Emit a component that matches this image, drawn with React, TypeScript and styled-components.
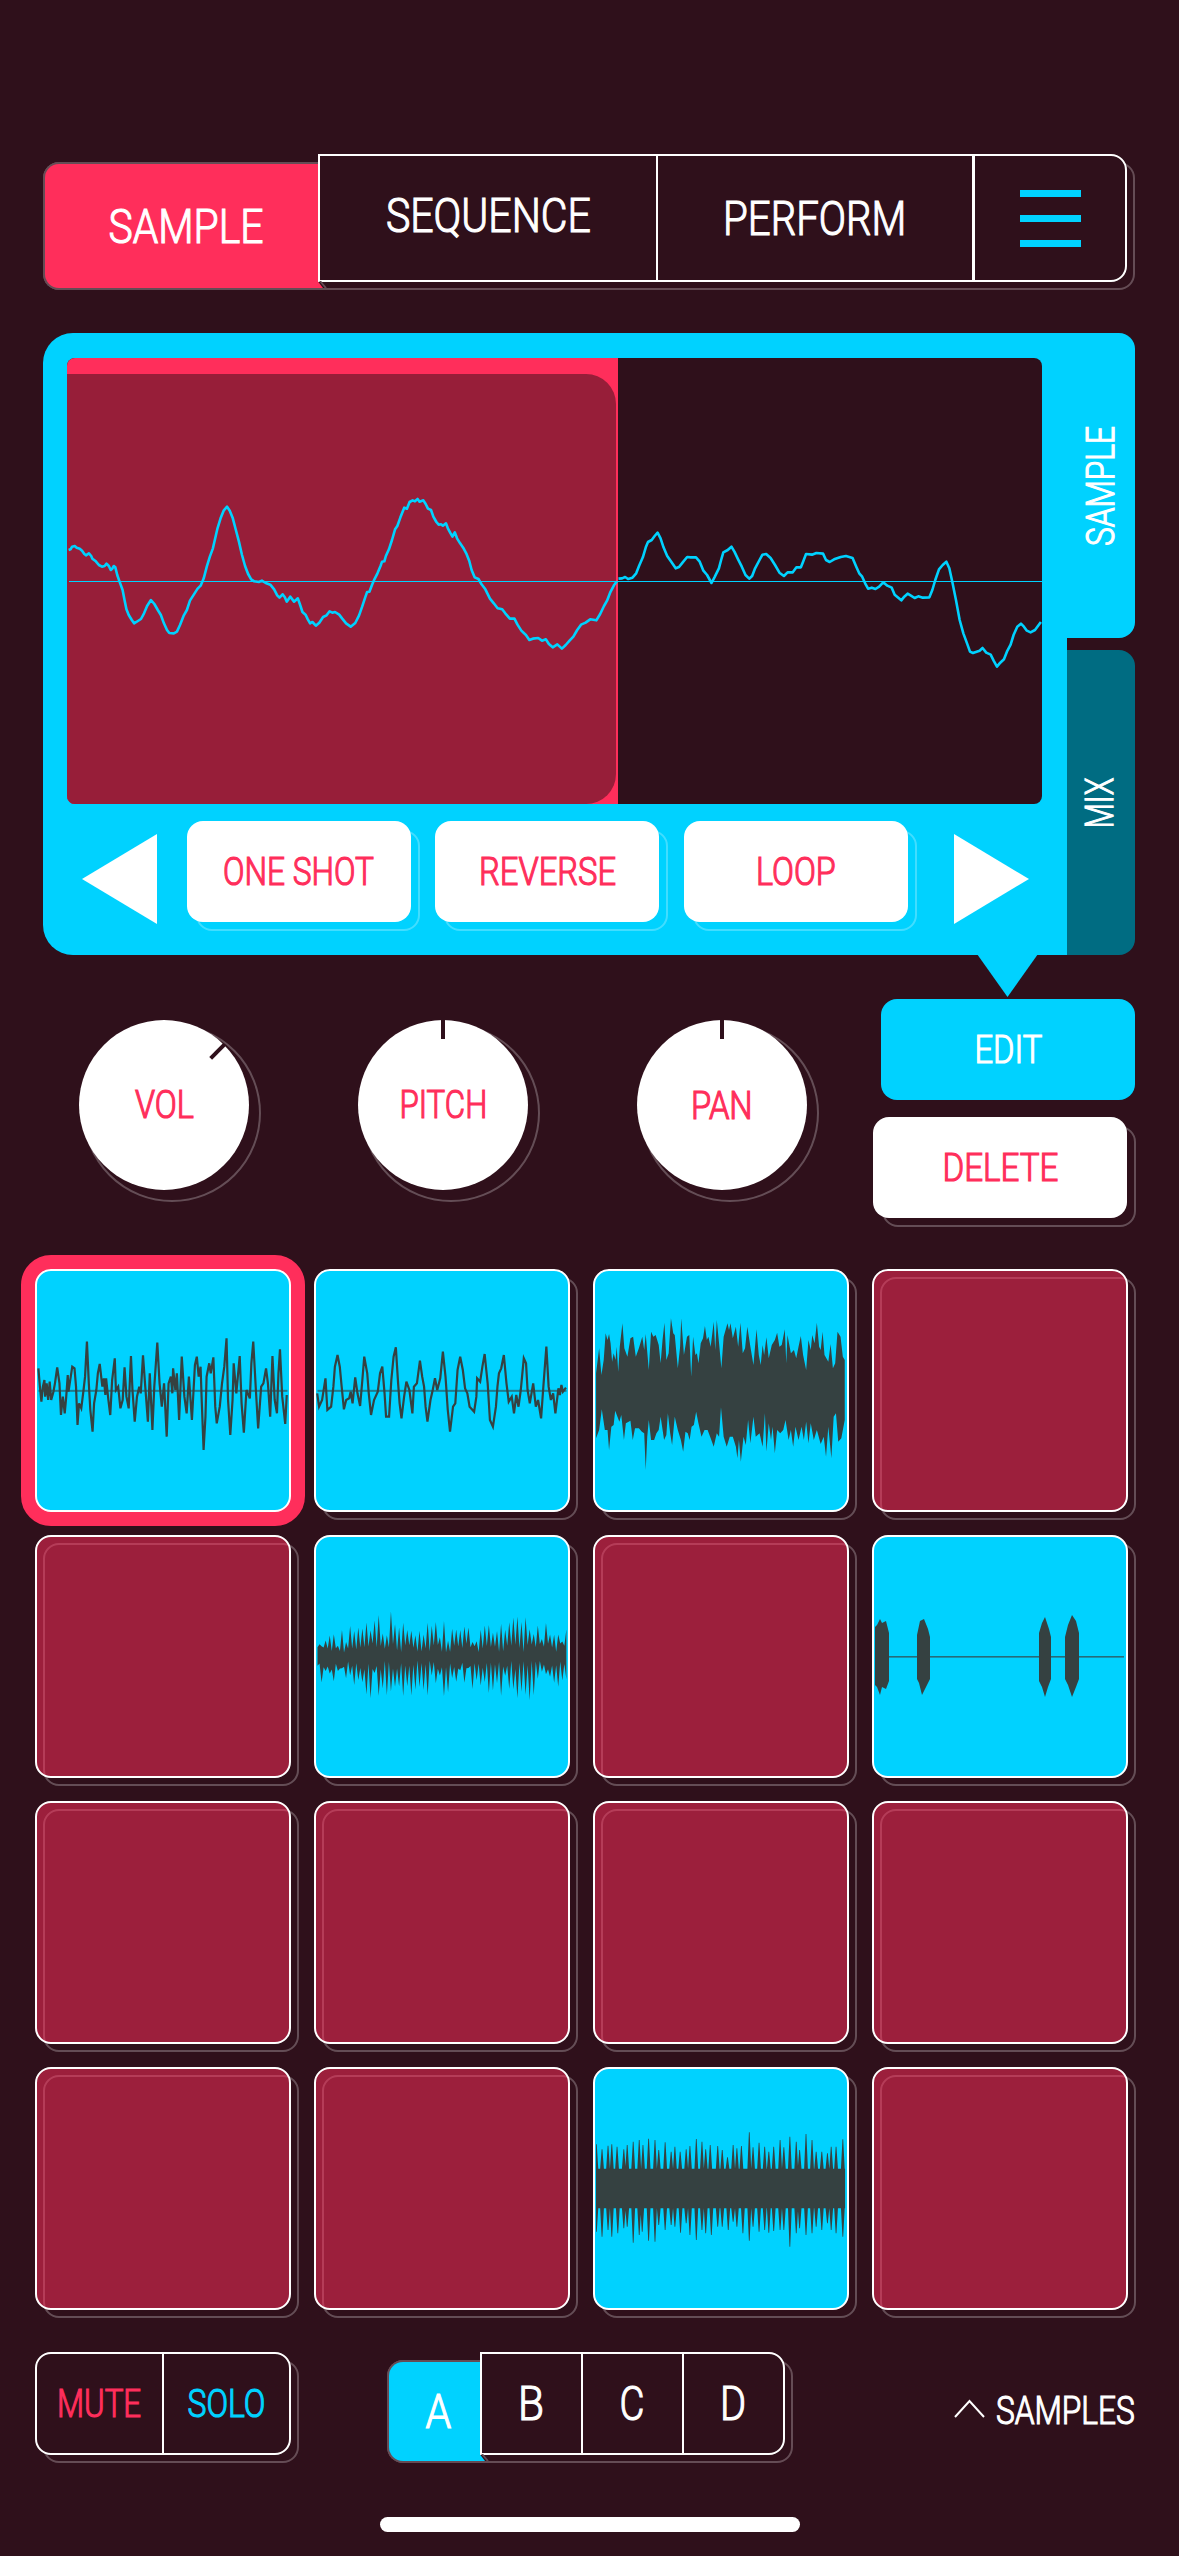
import React, { useLayoutEffect, useRef, useState } from "react";
import styled, { createGlobalStyle } from "styled-components";

const C = {
  bg: "#2f101b",
  pink: "#ff2e5b",
  cyan: "#00d2ff",
  teal: "#006c82",
  ghost: "rgba(255,255,255,0.26)",
  ghostSolid: "#654c55",
  wave: "#354141",
};

const Global = createGlobalStyle`
  html, body { margin: 0; background: ${C.bg}; }
  *, *::before, *::after { box-sizing: border-box; }
`;

const Screen = styled.main`
  width: 1179px;
  height: 2556px;
  padding: 154px 35px 0;
  overflow: hidden;
  display: flex;
  flex-direction: column;
  background: ${C.bg};
  color: #fff;
  font-family: Roboto, "Liberation Sans", sans-serif;
`;

/* ---------- text ---------- */

const Text = styled.span<{ $size: number; $color: string }>`
  display: inline-block;
  flex: none;
  white-space: nowrap;
  font-size: ${(p) => p.$size}px;
  font-weight: 300;
  line-height: 1;
  color: ${(p) => p.$color};
  -webkit-text-stroke: 1.2px ${(p) => p.$color};
  stroke-linejoin: round;
`;

type LabelProps = {
  children: string;
  width: number;
  size?: number;
  color?: string;
  turned?: boolean;
  lift?: number;
};

/** Condenses a caption horizontally until it takes up the given width. */
function Label({ children, width, size = 38, color = "#fff", turned, lift = 0 }: LabelProps) {
  const ref = useRef<HTMLSpanElement>(null);
  const [scale, setScale] = useState(1);
  useLayoutEffect(() => {
    if (ref.current) setScale(width / ref.current.offsetWidth);
  }, [width, size, children]);
  return (
    <Text
      ref={ref}
      $size={size}
      $color={color}
      style={{ transform: `translateY(${-lift}px) ${turned ? "rotate(-90deg)" : ""} scaleX(${scale})` }}
    >
      {children}
    </Text>
  );
}

/* ---------- segmented bars ---------- */

const Segmented = styled.nav<{ $width: number; $height: number }>`
  position: relative;
  isolation: isolate;
  display: flex;
  width: ${(p) => p.$width}px;
  height: ${(p) => p.$height}px;
  &::before {
    content: "";
    position: absolute;
    z-index: -1;
    inset: 8px -8px -8px 8px;
    border: 2px solid ${C.ghostSolid};
    border-radius: 16px;
  }
`;

const Pressed = styled.button<{ $width: number; $fill: string }>`
  flex: none;
  width: ${(p) => p.$width}px;
  margin: 8px 0 -8px 8px;
  padding: 0 0 0 8px;
  display: flex;
  align-items: center;
  justify-content: center;
  font: inherit;
  background: ${(p) => p.$fill};
  border: 2px solid ${C.ghostSolid};
  border-right: 0;
  border-radius: 16px 0 0 16px;
`;

const Wedge = styled.svg<{ $left: number }>`
  position: absolute;
  left: ${(p) => p.$left}px;
  bottom: -7px;
  width: 10px;
  height: 8px;
`;

const Raisedbar = styled.div<{ $round?: boolean }>`
  flex: 1;
  display: flex;
  background: ${C.bg};
  border: 2px solid #fff;
  border-radius: ${(p) => (p.$round ? "16px" : "0 16px 16px 0")};
  position: relative;
`;

const Segment = styled.button<{ $width?: number; $rule?: number }>`
  flex: ${(p) => (p.$width ? `0 0 ${p.$width}px` : "1")};
  display: flex;
  align-items: center;
  justify-content: center;
  padding: 0;
  background: none;
  border: 0 solid #fff;
  border-right-width: ${(p) => p.$rule ?? 0}px;
  font: inherit;
`;

const Burger = styled.span`
  width: 61px;
  height: 57px;
  display: flex;
  flex-direction: column;
  justify-content: space-between;
  span {
    height: 7px;
    background: ${C.cyan};
  }
`;

function PressedWedge({ left, fill }: { left: number; fill: string }) {
  return (
    <Wedge $left={left} viewBox="0 0 10 8">
      <path d="M0 0V7H5L0 0.5Z" fill={fill} />
      <path d="M2 0L8 7.2" stroke={C.ghostSolid} strokeWidth="1.8" />
    </Wedge>
  );
}

/* ---------- sample editor ---------- */

const Editor = styled.section`
  position: relative;
  display: flex;
  width: 1092px;
  height: 622px;
  margin: 51px 0 0 8px;
`;

const EditorBody = styled.div`
  flex: none;
  width: 1023.5px;
  padding: 25px 0 0 24px;
  background: ${C.cyan};
  border-radius: 30px 0 0 30px;
`;

const Pointer = styled.svg`
  position: absolute;
  left: 934px;
  top: 621px;
  width: 61px;
  height: 43px;
`;

const View = styled.div`
  position: relative;
  width: 975px;
  height: 446px;
  border-radius: 8px;
  overflow: hidden;
  background: ${C.bg};
`;

const Selection = styled.div`
  width: 551px;
  height: 446px;
  padding: 16px 2px 0 0;
  background: ${C.pink};
  &::before {
    content: "";
    display: block;
    height: 430px;
    background: #971e39;
    border-radius: 0 30px 30px 0;
  }
`;

const Trace = styled.svg`
  position: absolute;
  inset: 0;
  width: 975px;
  height: 446px;
`;

const Controls = styled.div`
  display: flex;
  align-items: flex-start;
  padding: 17px 0 0 15px;
`;

const Arrow = styled.svg<{ $gap?: number }>`
  flex: none;
  width: 75px;
  height: 90px;
  margin: 13px 0 0 ${(p) => p.$gap ?? 0}px;
  fill: #fff;
`;

const ButtonSet = styled.div`
  display: flex;
  gap: 24.6px;
  margin-left: 29.5px;
`;

const Key = styled.button<{ $width: number; $left?: number; $flat?: boolean }>`
  position: relative;
  width: ${(p) => p.$width}px;
  height: 101px;
  margin: 0 0 0 ${(p) => p.$left ?? 0}px;
  padding: 0;
  border: 0;
  background: none;
  isolation: isolate;
  font: inherit;
  &::before {
    content: "";
    display: ${(p) => (p.$flat ? "none" : "block")};
    position: absolute;
    z-index: -1;
    inset: 9px -9px -9px 9px;
    border: 2px solid ${C.ghost};
    border-radius: 16px;
  }
`;

const KeyFace = styled.span<{ $fill?: string }>`
  display: flex;
  align-items: center;
  justify-content: center;
  width: 100%;
  height: 100%;
  background: ${(p) => p.$fill ?? "#fff"};
  border-radius: 16px;
`;

const Tabs = styled.div`
  flex: none;
  width: 68.5px;
  display: flex;
  flex-direction: column;
  gap: 12px;
`;

const Tab = styled.button<{ $fill: string }>`
  flex: 1;
  min-width: 0;
  display: flex;
  align-items: center;
  justify-content: center;
  padding: 0;
  border: 0;
  background: ${(p) => p.$fill};
  border-radius: 0 16px 16px 0;
  font: inherit;
`;

/* ---------- grids ---------- */

const Columns = styled.section<{ $top: number }>`
  display: grid;
  grid-template-columns: repeat(4, 256px);
  gap: 23px;
  margin-top: ${(p) => p.$top}px;
`;

const Knob = styled.div`
  position: relative;
  isolation: isolate;
  width: 170px;
  height: 170px;
  margin: 21px 0 0 44px;
  &::before {
    content: "";
    position: absolute;
    z-index: -1;
    left: 4px;
    top: 4px;
    width: 178px;
    height: 178px;
    border: 2px solid ${C.ghost};
    border-radius: 50%;
  }
`;

const Dial = styled.div`
  display: flex;
  align-items: center;
  justify-content: center;
  width: 170px;
  height: 170px;
  border-radius: 50%;
  background: #fff;
`;

const Tick = styled.i<{ $angle: number }>`
  position: absolute;
  left: 83px;
  top: -1px;
  width: 4px;
  height: 20px;
  background: ${C.bg};
  transform-origin: 2px 86px;
  transform: rotate(${(p) => p.$angle}deg);
`;

const Stack = styled.div`
  display: flex;
  flex-direction: column;
  gap: 17px;
  padding-left: 1px;
`;

const PadCell = styled.div<{ $selected?: boolean }>`
  position: relative;
  isolation: isolate;
  height: 243px;
  &::before {
    content: "";
    position: absolute;
    z-index: -1;
    inset: ${(p) => (p.$selected ? "-14px" : "8px -8px -8px 8px")};
    border: 2px solid ${(p) => (p.$selected ? C.pink : C.ghost)};
    background: ${(p) => (p.$selected ? C.pink : "none")};
    border-radius: ${(p) => (p.$selected ? 30 : 16)}px;
  }
`;

const PadFace = styled.button<{ $loaded: boolean }>`
  display: block;
  width: 256px;
  height: 243px;
  padding: 0;
  overflow: hidden;
  border: 2px solid #fff;
  border-radius: 16px;
  background: ${(p) => (p.$loaded ? C.cyan : "rgba(255,46,91,0.525)")};
  background-clip: border-box;
`;

const PadWave = styled.svg`
  display: block;
  width: 252px;
  height: 239px;
`;

/* ---------- footer ---------- */

const Footer = styled.footer`
  display: flex;
  margin-top: 42px;
  height: 103px;
`;

const Bank = styled.div`
  margin-left: 88px;
`;

const Samples = styled.button`
  display: flex;
  align-items: center;
  justify-content: center;
  width: 139px;
  height: 40px;
  margin: 39px 0 0 11px;
  padding: 0;
  border: 0;
  background: none;
  font: inherit;
`;

const Chevron = styled.svg`
  width: 31px;
  height: 19px;
  margin: 47px 0 0 169px;
  fill: none;
  stroke: #fff;
  stroke-width: 2;
`;

const HomeBar = styled.div`
  width: 420px;
  height: 15px;
  margin: 62px 0 0 345px;
  border-radius: 8px;
  background: #fff;
`;

/* ---------- wave data ---------- */

const MAIN_A =
  "101,690 106,688 110,680 117,678 122,683 130,686 136,692 142,702 147,706 154,700 160,708 163,716 172,724 180,735 188,740 195,738 200,731 206,738 211,750 215,746 219,738 223,742 228,765 234,785 242,810 247,840 252,868 258,885 266,900 272,910 278,906 290,897 298,880 306,858 316,840 325,852 334,870 342,885 350,910 358,930 364,939 376,940 384,935 392,915 402,886 410,870 418,842 428,824 438,806 446,797 454,775 462,740 470,710 478,685 484,655 490,625 498,595 506,572 515,560 522,572 530,595 538,630 546,665 554,705 562,738 570,762 578,778 586,784 598,786 606,782 616,789 628,794 638,808 646,826 652,833 660,823 666,832 671,845 680,830 690,845 700,835 706,855 712,876 720,884 726,898 732,910 738,906 747,917 756,908 766,891 775,886 783,874 790,878 797,876 808,884 816,896 826,910 838,920 850,909 860,886 868,860 876,832 881,816 887,815 894,794 900,778 908,760 916,738 920,725 926,724 930,708 938,688 946,660 954,628 960,618 968,592 978,563 985,566 992,546 1000,541 1006,544 1013,537 1018,545 1028,541 1034,552 1040,566 1048,570 1054,590 1062,606 1068,614 1074,613 1079,617 1087,610 1092,625 1098,638 1104,650 1110,637 1116,655 1124,670 1132,683 1140,700 1148,723 1154,750 1162,772 1172,777 1180,793 1190,808 1202,836 1212,850 1222,865 1234,868 1242,880 1254,896 1266,896 1274,914 1284,932 1296,945 1305,960 1314,956 1328,954 1338,962 1348,958 1356,972 1366,982 1378,973 1390,986 1400,975 1410,962 1420,950 1430,930 1440,914 1452,908 1464,898 1480,901 1490,882 1500,858 1508,842 1516,818 1526,796 1534,784";
const MAIN_B =
  "50,776 60,775 68,771 76,777 88,773 98,760 106,737 116,712 124,682 130,666 140,660 148,648 156,638 164,655 172,682 182,708 192,724 205,745 214,741 224,727 236,711 246,712 260,712 270,725 280,752 290,765 302,789 310,772 322,745 328,720 334,697 346,690 356,680 364,695 374,718 384,740 394,765 404,776 412,768 420,745 432,720 440,704 450,702 462,714 474,735 486,758 498,768 508,757 522,757 532,742 544,742 550,725 558,702 574,704 586,699 604,701 612,720 622,726 634,718 652,711 666,708 684,714 694,740 702,760 710,770 718,790 726,806 736,803 746,807 756,800 767,787 778,797 790,803 798,824 816,841 824,830 833,821 842,827 852,834 862,829 874,833 892,832 900,810 908,780 918,748 928,735 938,725 946,745 954,785 964,840 974,900 984,940 994,970 1002,995 1010,999 1028,992 1036,984 1046,998 1058,1004 1066,1022 1075,1040 1084,1028 1094,1018 1102,995 1112,974 1120,945 1130,920 1140,911 1148,920 1156,932 1166,937 1178,930 1186,918 1194,906";
const PAD_1 =
  "102,385 106,440 110,485 114,440 118,420 120,470 124,430 128,480 132,425 136,480 142,455 146,430 152,382 158,430 162,525 167,470 172,520 176,470 180,405 182,455 188,410 192,380 198,385 202,440 206,555 210,490 216,505 222,450 226,410 231,305 236,430 240,510 246,575 250,490 256,450 260,400 265,372 272,440 276,415 280,465 282,415 288,480 293,525 298,420 305,355 308,450 314,440 320,505 326,480 331,382 336,470 342,505 348,348 352,450 358,545 364,470 370,440 374,460 380,346 386,440 393,545 398,400 405,570 410,440 418,308 424,430 430,500 436,430 443,590 448,430 454,410 458,460 460,385 466,450 470,400 476,540 483,350 490,470 496,520 502,410 510,540 518,375 523,350 528,410 533,380 536,480 541,630 546,530 549,410 556,370 560,400 567,352 572,500 576,550 584,500 590,430 596,380 602,295 606,480 612,585 618,480 621,370 628,460 637,348 642,490 648,578 655,450 664,475 668,370 673,305 680,450 686,565 694,440 700,430 707,385 712,430 718,530 724,348 730,480 736,520 740,400 744,328 750,470 758,552 762,465";
const PAD_2 =
  "843,460 848,500 856,480 865,415 870,510 880,500 886,440 890,380 897,345 903,380 908,440 914,508 920,480 928,475 932,455 937,490 944,412 950,460 957,498 963,420 968,350 976,400 980,460 986,525 994,480 1004,455 1010,400 1016,380 1022,460 1026,530 1034,530 1040,420 1046,350 1052,322 1058,430 1062,490 1067,535 1074,470 1080,425 1088,450 1096,520 1100,440 1108,430 1116,362 1122,410 1127,440 1131,500 1136,545 1144,480 1150,450 1156,415 1162,450 1170,415 1177,335 1184,410 1190,510 1196,575 1204,500 1210,490 1216,390 1223,350 1230,390 1236,445 1242,460 1248,500 1260,515 1266,470 1268,415 1276,425 1282,380 1288,342 1296,430 1302,540 1310,560 1318,500 1322,440 1326,400 1332,385 1339,345 1346,430 1352,485 1360,470 1366,520 1372,465 1378,500 1384,450 1392,355 1398,370 1402,450 1408,490 1417,430 1424,500 1430,480 1438,535 1444,440 1452,320 1458,440 1464,480 1470,460 1476,520 1484,445 1488,465 1492,435 1496,455 1504,443";
const PAD_3_TOP =
  "42,400 50,325 56,405 62,360 67,280 72,300 76,282 80,310 84,365 88,340 93,360 96,320 100,395 104,320 111,250 116,325 124,350 132,295 139,290 146,350 154,325 163,290 168,330 172,282 180,390 186,275 192,290 198,285 206,315 211,370 216,300 221,248 226,360 232,340 238,235 244,280 248,285 256,385 262,320 265,235 272,345 280,290 286,285 291,410 296,290 302,345 306,340 310,370 316,310 322,295 327,258 332,300 336,290 342,320 350,245 354,330 358,240 364,310 370,385 376,290 386,250 390,270 394,250 400,295 408,260 414,320 420,248 426,340 432,325 438,260 446,320 454,375 462,268 468,345 473,375 478,315 482,345 488,292 494,355 502,315 510,300 516,278 522,320 528,315 536,268 540,370 543,285 552,340 560,330 566,355 572,320 578,288 584,345 592,390 598,300 604,330 608,285 614,310 620,248 626,320 630,330 635,275 640,345 650,365 656,312 662,385 668,370 674,275 682,290 688,350 693,360";
const PAD_3_BOTTOM =
  "42,595 50,570 57,508 65,570 72,570 76,630 82,560 88,555 92,512 98,530 103,545 108,525 115,600 120,550 132,542 138,600 144,565 154,565 162,575 168,580 172,690 176,590 180,540 186,600 194,600 200,580 206,570 211,530 220,600 226,585 230,520 236,580 241,615 248,530 256,570 264,600 270,635 276,575 282,580 287,600 292,560 298,555 304,515 310,550 318,590 326,570 334,570 342,595 350,620 358,580 364,590 369,502 376,590 384,620 392,590 400,590 408,620 412,655 416,600 421,665 428,590 434,615 440,540 446,610 454,530 460,590 470,580 478,620 484,520 488,635 494,550 500,600 504,560 510,640 516,570 524,580 532,570 538,540 546,600 552,570 558,620 564,560 572,600 580,560 586,600 592,545 598,610 604,550 612,600 620,570 630,612 638,590 644,650 650,560 658,655 664,530 670,520 676,605 684,595 693,540";
const PAD_15_UP =
  "17,283 32,298 48,287 58,283 72,290 90,298 99,285 115,275 131,270 141,285 156,266 173,270 183,300 200,277 216,305 226,290 240,305 256,298 266,288 283,267 298,275 308,298 320,285 340,288 352,300 366,322 381,285 391,295 403,288 424,247 434,292 450,278 465,290 476,305 489,290 506,270 516,292 532,260 549,275 558,300 575,252 591,270 602,305 617,305 632,310 642,290 655,290 673,268";
const PAD_15_DOWN =
  "17,545 32,560 48,540 58,560 74,550 90,535 99,530 115,578 131,555 139,545 156,572 173,575 183,525 200,540 216,525 226,530 241,548 256,520 266,555 283,570 298,540 308,550 323,555 340,530 352,530 368,540 381,515 391,530 407,550 424,572 434,530 450,545 465,540 476,548 489,543 506,540 516,540 532,590 549,550 558,535 575,555 591,550 602,530 617,540 632,520 642,540 655,550 673,560";

type Pt = [number, number];
const parse = (s: string): Pt[] => s.split(" ").map((p) => p.split(",").map(Number) as Pt);
const area = (top: Pt[], bottom: Pt[]) =>
  [...top, ...[...bottom].reverse()].map((p) => p.join(",")).join(" ");

/** Puts a narrow spike on a flat body edge at every given peak. */
const spikes = (s: string, edge: number, half: number, from: number, to: number): Pt[] => [
  [from, edge],
  ...parse(s).flatMap(([x, y]): Pt[] => [
    [Math.max(from, x - half), edge],
    [x - 1, y],
    [x + 1, y],
    [Math.min(to, x + half), edge],
  ]),
  [to, edge],
];

const Line = ({ box, points }: { box: string; points: string }) => {
  const [x, y, w, h] = box.split(" ").map(Number);
  const mid = y + h / 2 + 1;
  return (
    <PadWave viewBox={box} preserveAspectRatio="none">
      <rect x={x + 4} y={mid - 3} width={w - 8} height="6" fill={C.wave} opacity="0.6" />
      <polyline
        points={points}
        fill="none"
        stroke={C.wave}
        strokeWidth="2.2"
        vectorEffect="non-scaling-stroke"
      />
    </PadWave>
  );
};

const Solid = ({ box, points }: { box: string; points: string }) => (
  <PadWave viewBox={box} preserveAspectRatio="none">
    <polygon points={points} fill={C.wave} />
  </PadWave>
);

const pad6 = (() => {
  const top: Pt[] = [];
  const bottom: Pt[] = [];
  for (let i = 0; i <= 122; i++) {
    const x = 1.5 + i * 2.04;
    const swell = 22 + 20 * Math.exp(-(((i - 45) / 26) ** 2)) + 14 * Math.exp(-(((i - 100) / 16) ** 2));
    const a = Math.abs(Math.sin(i * 12.9898) * 43758.5453) % 1;
    const b = Math.abs(Math.sin(i * 78.233) * 12543.123) % 1;
    top.push([x, 119.5 - (i % 2 ? 4 + 9 * a : swell * (0.4 + 0.75 * a))]);
    bottom.push([x, 119.5 + (i % 2 ? 4 + 9 * b : swell * (0.4 + 0.85 * b))]);
  }
  return area(top, bottom);
})();

const waves: Record<number, React.ReactNode> = {
  0: <Line box="98.3 93 669.7 717" points={PAD_1} />,
  1: <Line box="839.8 93 669.7 717" points={PAD_2} />,
  2: <Solid box="39.2 93 659.7 717" points={area(parse(PAD_3_TOP), parse(PAD_3_BOTTOM))} />,
  5: <Solid box="0 0 252 239" points={pad6} />,
  7: (
    <PadWave viewBox="0 0 252 239" fill={C.wave}>
      <rect x="1" y="119" width="249" height="1.6" opacity="0.7" />
      <path d="M1 90L3 88L6 82L8 86L12 84L15 96V144L12 152L8 150L6 158L3 150L1 148ZM43 98L46 84L50 82L54 92L56 100V142L52 150L48 158L45 146L43 142ZM165 96L168 86L171 80L175 92L177 100V142L174 150L171 160L168 150L165 144ZM191 100L194 88L198 78L202 84L205 96V142L202 150L198 160L194 148L191 142Z" />
    </PadWave>
  ),
  14: (
    <Solid
      box="13.3 57 670.8 717"
      points={area(spikes(PAD_15_UP, 356, 5, 16, 679), spikes(PAD_15_DOWN, 475, 5, 16, 679))}
    />
  ),
};

export default function App() {
  return (
    <Screen>
      <Global />
      <Segmented $width={1092} $height={128}>
        <Pressed $width={275} $fill={C.pink}>
          <Label size={49} width={155}>SAMPLE</Label>
        </Pressed>
        <Raisedbar>
          <Segment $width={338} $rule={2}>
            <Label size={49} width={205} lift={3}>SEQUENCE</Label>
          </Segment>
          <Segment $width={317} $rule={3}>
            <Label size={49} width={183}>PERFORM</Label>
          </Segment>
          <Segment aria-label="Menu">
            <Burger>
              <span />
              <span />
              <span />
            </Burger>
          </Segment>
        </Raisedbar>
        <PressedWedge left={283} fill={C.pink} />
      </Segmented>

      <Editor>
        <EditorBody>
          <View>
            <Selection />
            <Trace viewBox="0 0 975 446">
              <rect x="2" y="223" width="973" height="1" fill={C.cyan} />
              <g fill="none" stroke={C.cyan} strokeWidth="2.6" strokeLinejoin="round">
                <g transform="translate(-37 -38) scale(0.38266 0.33333)">
                  <polyline points={MAIN_A} vectorEffect="non-scaling-stroke" />
                </g>
                <g transform="translate(533 -38) scale(0.36926 0.33333)">
                  <polyline points={MAIN_B} vectorEffect="non-scaling-stroke" />
                </g>
              </g>
            </Trace>
          </View>
          <Controls>
            <Arrow viewBox="0 0 75 90">
              <path d="M75 0V90L0 45Z" />
            </Arrow>
            <ButtonSet>
              <Key $width={224}>
                <KeyFace>
                  <Label width={151} color={C.pink}>ONE SHOT</Label>
                </KeyFace>
              </Key>
              <Key $width={224}>
                <KeyFace>
                  <Label width={137} color={C.pink}>REVERSE</Label>
                </KeyFace>
              </Key>
              <Key $width={224}>
                <KeyFace>
                  <Label width={80} color={C.pink}>LOOP</Label>
                </KeyFace>
              </Key>
            </ButtonSet>
            <Arrow $gap={46} viewBox="0 0 75 90">
              <path d="M0 0V90L75 45Z" />
            </Arrow>
          </Controls>
        </EditorBody>
        <Tabs>
          <Tab $fill={C.cyan}>
            <Label width={120} turned>SAMPLE</Label>
          </Tab>
          <Tab $fill={C.teal}>
            <Label width={51} turned>MIX</Label>
          </Tab>
        </Tabs>
        <Pointer viewBox="0 0 61 43">
          <path d="M0 0H61L30.5 43Z" fill={C.cyan} />
        </Pointer>
      </Editor>

      <Columns $top={44}>
        <Knob>
          <Dial>
            <Label width={59} color={C.pink}>VOL</Label>
          </Dial>
          <Tick $angle={45} />
        </Knob>
        <Knob>
          <Dial>
            <Label width={88} color={C.pink}>PITCH</Label>
          </Dial>
          <Tick $angle={0} />
        </Knob>
        <Knob>
          <Dial>
            <Label width={62} color={C.pink} lift={-1}>PAN</Label>
          </Dial>
          <Tick $angle={0} />
        </Knob>
        <Stack>
          <Key $width={254} $left={8} $flat>
            <KeyFace $fill={C.cyan}>
              <Label width={68}>EDIT</Label>
            </KeyFace>
          </Key>
          <Key $width={254}>
            <KeyFace>
              <Label width={116} color={C.pink}>DELETE</Label>
            </KeyFace>
          </Key>
        </Stack>
      </Columns>

      <Columns $top={51}>
        {Array.from({ length: 16 }, (_, i) => (
          <PadCell key={i} $selected={i === 0}>
            <PadFace $loaded={i in waves} aria-label={`Pad ${i + 1}`}>
              {waves[i]}
            </PadFace>
          </PadCell>
        ))}
      </Columns>

      <Footer>
        <Segmented $width={256} $height={103}>
          <Raisedbar $round>
            <Segment $width={127} $rule={2}>
              <Label width={84} color={C.pink}>MUTE</Label>
            </Segment>
            <Segment>
              <Label width={78} color={C.cyan}>SOLO</Label>
            </Segment>
          </Raisedbar>
        </Segmented>
        <Bank>
          <Segmented $width={405.5} $height={103}>
            <Pressed $width={92.5} $fill={C.cyan}>
              <Label size={49} width={26}>A</Label>
            </Pressed>
            <Raisedbar>
              <Segment $width={101.5} $rule={2}>
                <Label size={49} width={26}>B</Label>
              </Segment>
              <Segment $width={100.7} $rule={2}>
                <Label size={49} width={25}>C</Label>
              </Segment>
              <Segment>
                <Label size={49} width={26}>D</Label>
              </Segment>
            </Raisedbar>
            <PressedWedge left={100.5} fill={C.cyan} />
          </Segmented>
        </Bank>
        <Chevron viewBox="0 0 31 19">
          <path d="M1 18L15.5 2L30 18" />
        </Chevron>
        <Samples>
          <Label width={139}>SAMPLES</Label>
        </Samples>
      </Footer>

      <HomeBar />
    </Screen>
  );
}
